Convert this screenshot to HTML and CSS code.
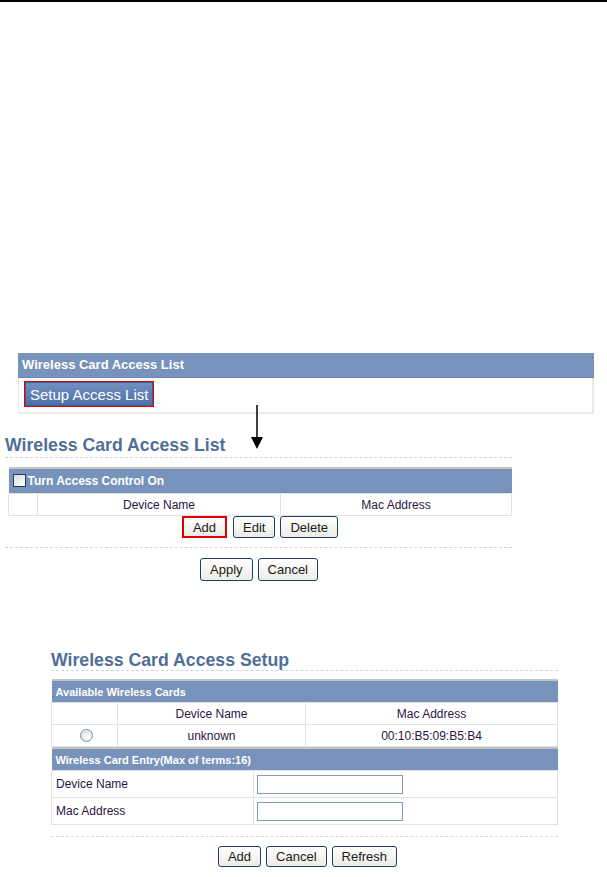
FILE: index.html
```html
<!DOCTYPE html>
<html lang="en">
<head>
    <meta charset="UTF-8">
    <title>Wireless Card Access List</title>
    <link rel="stylesheet" href="styles.css">
</head>
<body>
    <div class="top-rule"></div>

    <div class="panel">
        <div class="panel-head">Wireless Card Access List</div>
        <div class="panel-body">
            <span class="mark"><button class="setup-btn">Setup Access List</button></span>
        </div>
    </div>

    <svg class="arrow" width="12" height="46" viewBox="0 0 12 46">
        <line x1="6" y1="0" x2="6" y2="34" stroke="#000" stroke-width="1.5"/>
        <polygon points="0,32 12,32 6,44" fill="#000"/>
    </svg>

    <div class="section list-section">
        <h2 class="title">Wireless Card Access List</h2>
        <div class="list-body">
            <table class="grid">
                <tr class="head">
                    <td colspan="3"><span class="check"></span>Turn Access Control On</td>
                </tr>
                <tr>
                    <td class="c-sel"></td>
                    <td class="c-name">Device Name</td>
                    <td>Mac Address</td>
                </tr>
            </table>
            <div class="btn-row">
                <button class="btn marked">Add</button>
                <button class="btn">Edit</button>
                <button class="btn">Delete</button>
            </div>
        </div>
    </div>
    <div class="btn-row apply-row">
        <button class="btn">Apply</button>
        <button class="btn">Cancel</button>
    </div>

    <div class="section setup-section">
        <h2 class="title">Wireless Card Access Setup</h2>
        <table class="grid cards">
            <tr class="head">
                <td colspan="3">Available Wireless Cards</td>
            </tr>
            <tr>
                <td class="c-sel2"></td>
                <td class="c-name2">Device Name</td>
                <td>Mac Address</td>
            </tr>
            <tr>
                <td><span class="radio"></span></td>
                <td>unknown</td>
                <td>00:10:B5:09:B5:B4</td>
            </tr>
        </table>
        <table class="grid entry">
            <tr class="head">
                <td colspan="2">Wireless Card Entry(Max of terms:16)</td>
            </tr>
            <tr>
                <td class="label">Device Name</td>
                <td><input type="text" class="field"></td>
            </tr>
            <tr>
                <td class="label">Mac Address</td>
                <td><input type="text" class="field"></td>
            </tr>
        </table>
    </div>
    <div class="btn-row setup-row">
        <button class="btn">Add</button>
        <button class="btn">Cancel</button>
        <button class="btn">Refresh</button>
    </div>
</body>
</html>
```

FILE: styles.css
```css
body {
    margin: 0;
    background-color: #ffffff;
    font-family: "Liberation Sans", Arial, sans-serif;
    color: #2a1646;
    position: relative;
}

.top-rule {
    height: 2px;
    background-color: #000;
}

/* first screenshot: the small access list panel */
.panel {
    margin: 351px 13px 0 18px;
}

.panel-head {
    height: 24px;
    line-height: 24px;
    padding-left: 4px;
    background-color: #7893bb;
    border-bottom: 1px solid #6c86ad;
    color: #fff;
    font-size: 13px;
    font-weight: bold;
}

.panel-body {
    height: 31px;
    padding: 3px 0 0 5px;
    border: 2px solid #e9e9e9;
    border-top: 0;
    border-left-width: 1px;
}

.mark {
    display: inline-block;
    border: 1px solid #e00000;
    line-height: 0;
}

.setup-btn {
    height: 24px;
    padding: 0 4px;
    border: 1px solid #3c5f96;
    background: linear-gradient(#7290c0, #4d70aa);
    color: #fff;
    font-family: "Liberation Sans", Arial, sans-serif;
    font-size: 15px;
}

.arrow {
    position: absolute;
    left: 251px;
    top: 405px;
}

/* headings with the dashed rule below */
.section {
    width: 507px;
}

.title {
    margin: 0;
    height: 22px;
    border-bottom: 1px dashed #ccd5e2;
    color: #4f6f99;
    font-size: 17.7px;
    line-height: 20px;
}

.list-section {
    margin: 21px 0 0 5px;
}

.list-body {
    padding: 9px 0 9px 3px;
    border-bottom: 1px dashed #ccd5e2;
}

.grid {
    width: 100%;
    border-collapse: collapse;
    font-size: 12px;
    text-align: center;
}

.grid td {
    border: 1px solid #e2e2e2;
    padding: 0;
    height: 21px;
}

.grid .head td {
    height: 24px;
    border: 0;
    border-top: 2px solid #c4c4c4;
    background-color: #7893bb;
    color: #fff;
    font-weight: bold;
    text-align: left;
    padding-left: 4px;
}

.check {
    display: inline-block;
    width: 11px;
    height: 11px;
    margin-right: 2px;
    vertical-align: -2px;
    border: 1px solid #1c3d6e;
    background: linear-gradient(135deg, #dcdcd6, #ffffff);
}

.c-sel {
    width: 28px;
}

.c-name {
    width: 242px;
}

.btn-row {
    display: flex;
    justify-content: center;
    gap: 5px;
}

.btn {
    height: 22px;
    padding: 0 9px;
    border: 1px solid #1c3d6e;
    border-radius: 3px;
    background: linear-gradient(#ffffff, #ecebe4);
    color: #1a1a1a;
    font-family: "Liberation Sans", Arial, sans-serif;
    font-size: 13px;
}

.btn.marked {
    border: 2px solid #e00000;
    border-radius: 0;
    padding: 0 9px;
    margin-right: 1px;
}

.apply-row {
    width: 518px;
    padding-top: 10px;
}

.apply-row .btn {
    height: 23px;
}

/* last screenshot: the setup form */
.setup-section {
    margin: 70px 0 0 51px;
    padding-bottom: 11px;
    border-bottom: 1px dashed #d4d8de;
}

.setup-section .title {
    height: 19px;
    line-height: 18px;
}

.cards {
    margin-top: 8px;
}

.setup-section .grid .head td {
    height: 21px;
    font-size: 11px;
}

.c-sel2 {
    width: 65px;
}

.c-name2 {
    width: 187px;
}

.radio {
    display: inline-block;
    width: 11px;
    height: 11px;
    margin-left: 4px;
    vertical-align: -2px;
    border: 1px solid #7b8a9e;
    border-radius: 50%;
    background: radial-gradient(circle at 60% 65%, #ffffff, #d8d8d8);
}

.entry td {
    height: 26px;
    text-align: left;
}

.entry .label {
    width: 197px;
    padding-left: 4px;
}

.field {
    width: 146px;
    height: 19px;
    box-sizing: border-box;
    margin-left: 3px;
    border: 1px solid #7f9db9;
    display: block;
}

.setup-row {
    width: 615px;
    padding-top: 9px;
}

.setup-row .btn {
    height: 21px;
}
```
